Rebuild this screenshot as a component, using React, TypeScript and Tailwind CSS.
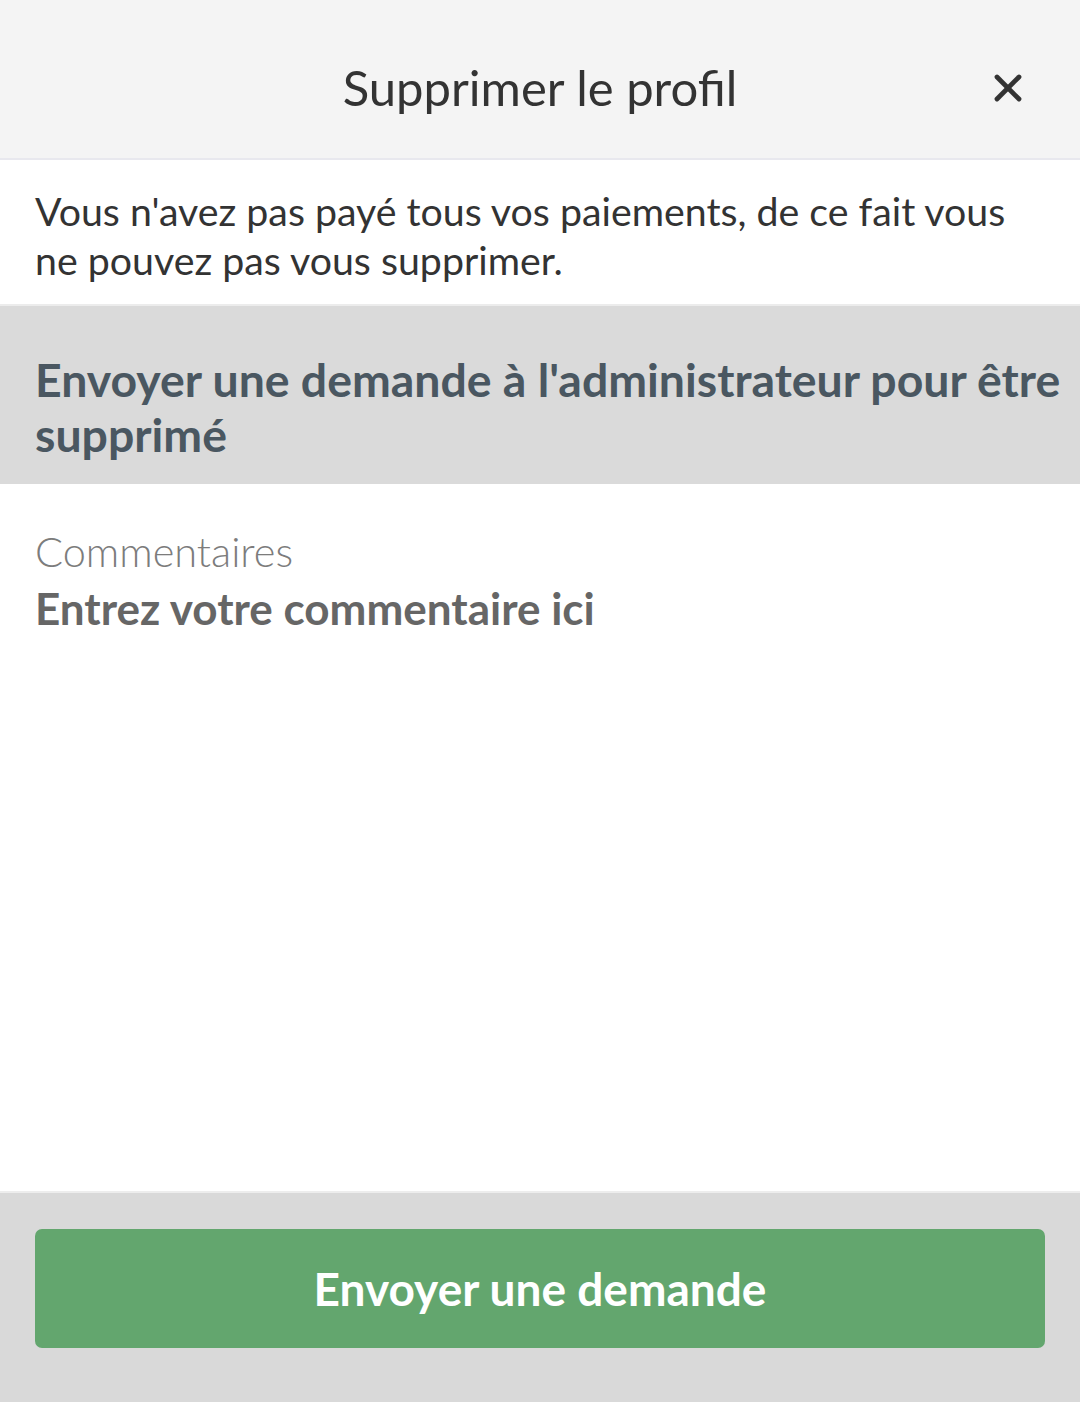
import { X } from "lucide-react";

export default function App() {
  return (
    <div
      className="w-[1080px] h-[1402px] flex flex-col bg-white overflow-hidden"
      style={{ fontFamily: "Lato, 'Open Sans', sans-serif" }}
    >
      {/* Header */}
      <header className="h-[160px] shrink-0 bg-[#f4f4f4] border-b-2 border-[#e8e8ee] relative flex items-center justify-center pt-[18px]">
        <h1 className="text-[49px] text-[#333333] font-normal">Supprimer le profil</h1>
        <button className="absolute right-[50px] top-[66px] w-[44px] h-[44px] flex items-center justify-center text-[#333333]">
          <X size={44} strokeWidth={2.6} />
        </button>
      </header>

      {/* Warning */}
      <div className="px-[35px] pt-[26px] pb-[20px] border-b-2 border-[#ececec]">
        <p className="text-[39.3px] leading-[49px] text-[#333333]">
          Vous n'avez pas payé tous vos paiements, de ce fait vous ne pouvez pas vous supprimer.
        </p>
      </div>

      {/* Request band */}
      <div className="bg-[#dadada] pl-[35px] pr-[8px] pt-[46px] pb-[22px]">
        <h2 className="text-[46.4px] leading-[55px] font-bold text-[#4a5761]">
          Envoyer une demande à l'administrateur pour être supprimé
        </h2>
      </div>

      {/* Comments */}
      <div className="flex-1 px-[35px] pt-[43px]">
        <label className="block text-[41.5px] leading-[48px] text-[#7c7c7c] font-light">Commentaires</label>
        <textarea
          placeholder="Entrez votre commentaire ici"
          className="w-full mt-[5px] h-[300px] resize-none outline-none text-[44px] leading-[56px] font-bold text-[#666666] placeholder:text-[#666666] bg-transparent"
        />
      </div>

      {/* Footer */}
      <footer className="h-[211px] shrink-0 bg-[#d9d9d9] border-t-2 border-[#ededed] px-[35px] pt-[36px]">
        <button className="w-full h-[119px] rounded-[7px] bg-[#63a66e] text-white text-[46px] font-bold">
          Envoyer une demande
        </button>
      </footer>
    </div>
  );
}
